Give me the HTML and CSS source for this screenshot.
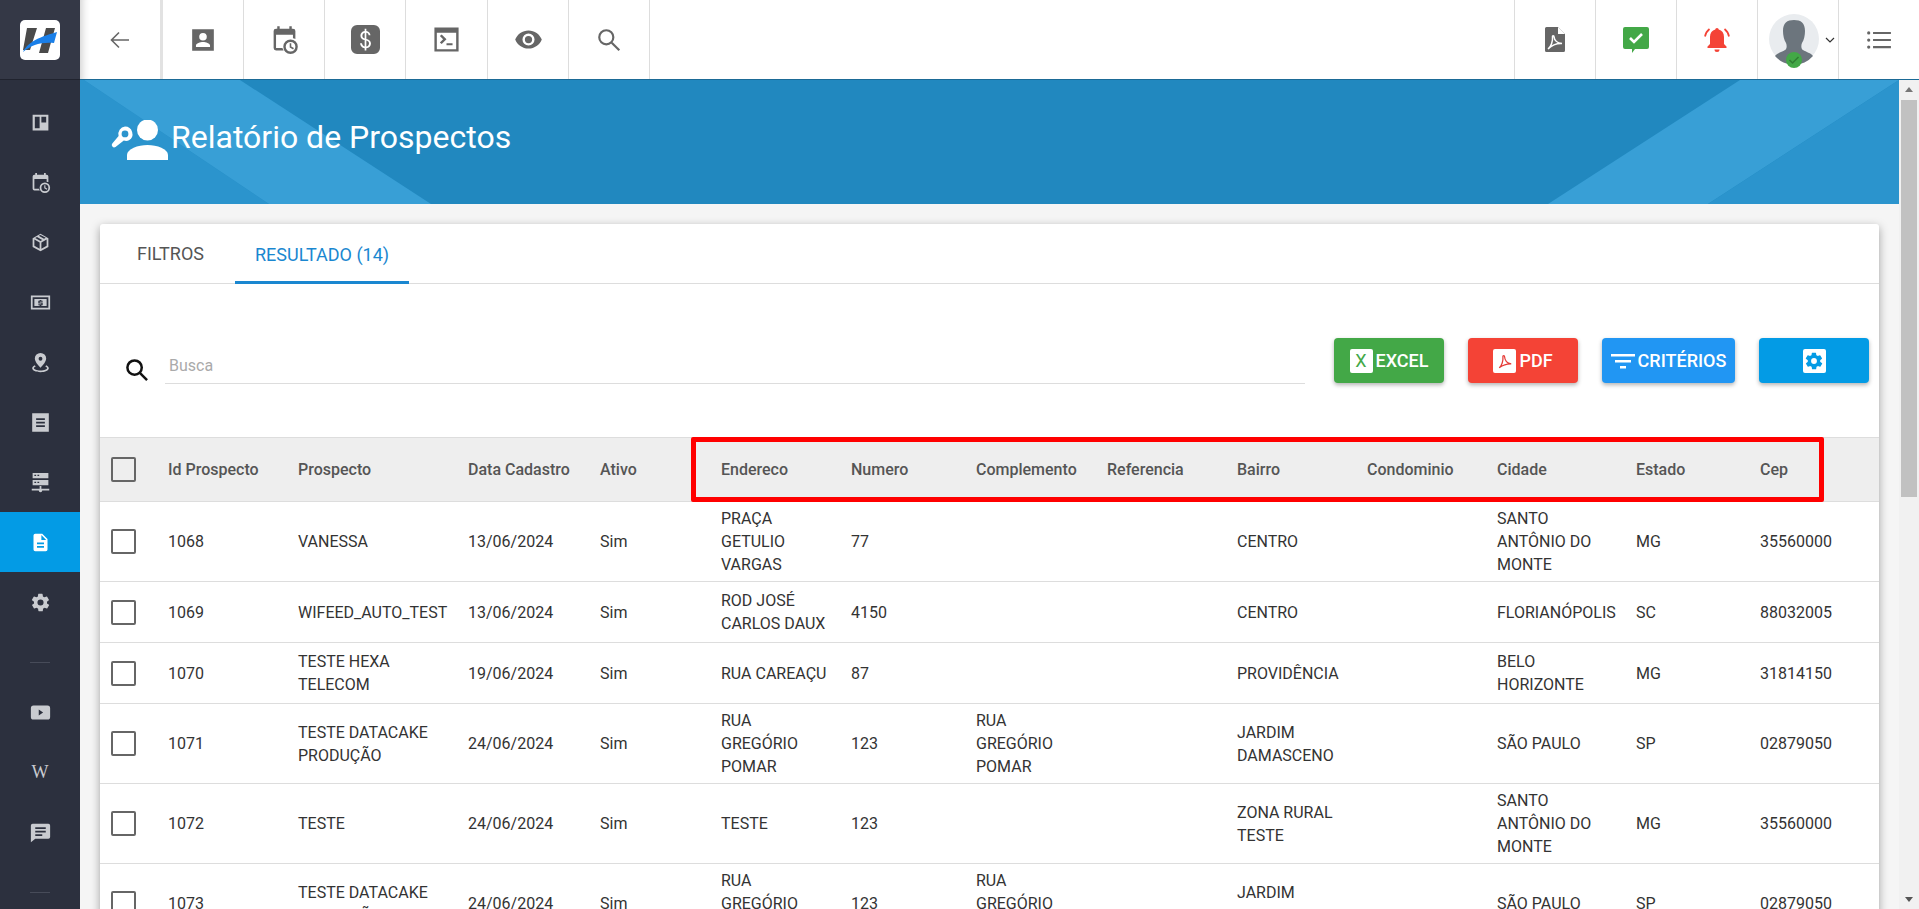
FILE: index.html
```html
<!DOCTYPE html>
<html lang="pt-BR">
<head>
    <meta charset="UTF-8">
    <title>Relatório de Prospectos</title>
    <link rel="stylesheet" href="styles.css">
</head>
<body>

    <svg class="sprites" width="0" height="0">
        <symbol id="i-cal" viewBox="0 0 24 24"><path d="M6 1h2v2h8V1h2v2h1a2 2 0 0 1 2 2v6.500a7 7 0 0 0-2-.5V8H5v11h5.300a7 7 0 0 0 1 2H5a2 2 0 0 1-2-2V5a2 2 0 0 1 2-2h1z"/><path fill-rule="evenodd" d="M17 12a6 6 0 1 0 0 12 6 6 0 0 0 0-12zm0 2a4 4 0 1 1 0 8 4 4 0 0 1 0-8zm-.7 1v3.600l2.800 1.600.7-1.100-2.200-1.300V15z"/></symbol>
        <symbol id="i-gear" viewBox="0 0 24 24"><path d="M19.400 13a7.500 7.500 0 0 0 0-2l2.100-1.600a.5.5 0 0 0 .1-.6l-2-3.500a.5.5 0 0 0-.6-.2l-2.500 1a7.300 7.300 0 0 0-1.700-1l-.4-2.600a.5.500 0 0 0-.5-.5h-4a.5.500 0 0 0-.5.400l-.4 2.700a7.700 7.700 0 0 0-1.700 1l-2.500-1a.5.500 0 0 0-.6.200l-2 3.500a.5.500 0 0 0 .1.600L4.600 11a7.900 7.900 0 0 0 0 2l-2.100 1.600a.5.500 0 0 0-.1.600l2 3.500c.1.200.4.300.6.200l2.500-1c.5.400 1.100.7 1.700 1l.4 2.600c0 .3.200.5.500.5h4c.2 0 .5-.2.500-.4l.4-2.700a7.700 7.700 0 0 0 1.700-1l2.500 1c.2.100.5 0 .6-.2l2-3.500a.5.500 0 0 0-.1-.6zM12 15.500a3.500 3.500 0 1 1 0-7 3.500 3.500 0 0 1 0 7z"/></symbol>
    </svg>

    <aside class="sidebar">
        <div class="brand">
            <div class="logo">
                <svg viewBox="0 0 40 40" width="40" height="40">
                    <path fill="#4a4a4a" d="M7 8h10l-7 22H3zM26 8h9l-7 25h-9z"/>
                    <path fill="#1a7fe8" d="M3 32C7 24 15 18 37 12l-3 11c-14-1-22 2-31 9z"/>
                </svg>
            </div>
        </div>
        <nav class="side-nav">
            <a class="side-item"><svg viewBox="0 0 24 24"><path fill-rule="evenodd" d="M3 3h18v18H3zm2.500 2.500v13h5.500v-13zm7.500 0V12h5.500V5.500z"/></svg></a>
            <a class="side-item"><svg><use href="#i-cal"/></svg></a>
            <a class="side-item"><svg viewBox="0 0 24 24"><path fill-rule="evenodd" d="M12 2l9 5v10l-9 5-9-5V7zM8 5.600L6 6.900l6 3.300 2-1.200zm2-1.200l6 3.400 2-1.100-6-3.300zM5 8.700v7.100l6 3.400v-7.200zm14 0l-6 3.300v7.200l6-3.400z"/></svg></a>
            <a class="side-item"><svg viewBox="0 0 24 24"><path fill-rule="evenodd" d="M1 4h22v16H1zm2 2v12h18V6zm2 2h14v8H5zm6 1v1h-1.500v3H13v1H9.500v1H11v1h2v-1h1.500v-3H11v-1h3.500V10H13V9z"/></svg></a>
            <a class="side-item"><svg viewBox="0 0 24 24"><path fill-rule="evenodd" d="M12 1a6.500 6.500 0 0 0-6.500 6.500C5.500 12 12 18 12 18s6.500-6 6.500-10.500A6.500 6.500 0 0 0 12 1zm0 4.500a2.200 2.200 0 1 1 0 4.400 2.200 2.200 0 0 1 0-4.400z"/><path d="M5.500 15C3.400 16 2.500 17.200 2.500 18.500c0 2.500 4.200 4.500 9.500 4.500s9.500-2 9.500-4.500c0-1.300-.9-2.500-3-3.500l-1 1.700c1.300.6 2 1.200 2 1.800 0 1-3 2.500-7.500 2.500s-7.500-1.500-7.500-2.500c0-.6.700-1.200 2-1.800z"/></svg></a>
            <a class="side-item"><svg viewBox="0 0 24 24"><path fill-rule="evenodd" d="M2.500 1.500h19v21h-19zM7 7v2h10V7zm0 4v2h10v-2zm0 4v2h10v-2z"/></svg></a>
            <a class="side-item"><svg viewBox="0 0 24 24"><path fill-rule="evenodd" d="M3 1h18v6H3zm2 2v1.500h2V3zm3.500 0v1.500h2V3zM3 9h18v6H3zm2 2v1.500h2V11zm3.500 0v1.500h2V11zM11 16h2v3.200h9V21h-8a2 2 0 0 1-4 0H2v-1.800h9z"/></svg></a>
            <a class="side-item active"><svg viewBox="0 0 24 24"><path fill-rule="evenodd" d="M6 2h8l6 6v12a2 2 0 0 1-2 2H6a2 2 0 0 1-2-2V4a2 2 0 0 1 2-2zm7 1.500V9h5.500zM8 12v2h8v-2zm0 4v2h8v-2z"/></svg></a>
            <a class="side-item"><svg><use href="#i-gear"/></svg></a>
            <hr class="side-sep">
            <a class="side-item"><svg viewBox="0 0 24 24"><path fill-rule="evenodd" d="M4 4h16a3 3 0 0 1 3 3v10a3 3 0 0 1-3 3H4a3 3 0 0 1-3-3V7a3 3 0 0 1 3-3zm6 4.500v7l5-3.500z"/></svg></a>
            <a class="side-item wiki">W</a>
            <a class="side-item"><svg viewBox="0 0 24 24"><path fill-rule="evenodd" d="M3 2h18a2 2 0 0 1 2 2v13a2 2 0 0 1-2 2H6l-5 4V4a2 2 0 0 1 2-2zm3 4v2h12V6zm0 4v2h12v-2zm0 4v2h8v-2z"/></svg></a>
            <hr class="side-sep">
        </nav>
    </aside>

    <header class="topbar">
        <a class="top-cell back"><svg viewBox="0 0 24 24" fill="none" stroke="#666" stroke-width="1.600"><path d="M21 12H3.500M11 4.500L3.500 12l7.500 7.500"/></svg></a>
        <a class="top-cell"><svg viewBox="0 0 24 24"><path fill-rule="evenodd" d="M2 2h20v20H2zm10 3.500a3.500 3.500 0 1 0 0 7 3.500 3.500 0 0 0 0-7zM5.500 18.500h13V17c0-2-4-3.200-6.500-3.200S5.500 15 5.500 17z"/></svg></a>
        <a class="top-cell"><svg class="wide"><use href="#i-cal"/></svg></a>
        <a class="top-cell"><svg class="wide" viewBox="0 0 24 24"><path fill-rule="evenodd" d="M5 0h14a5 5 0 0 1 5 5v14a5 5 0 0 1-5 5H5a5 5 0 0 1-5-5V5a5 5 0 0 1 5-5zm6.300 3v2C9 5.400 7.800 7 7.800 8.800c0 2.300 1.700 3.200 3.500 3.700v5.300c-1.300-.3-2.100-1.300-2.200-2.600H7.500c.1 2.200 1.500 3.800 3.800 4.100V21h1.400v-1.700c2.300-.3 3.800-1.900 3.800-4 0-2.500-1.900-3.300-3.800-3.800V6.400c1.100.2 1.800 1 1.900 2.100h1.500c-.1-1.900-1.400-3.300-3.400-3.600V3zm0 3.400v4.700c-1.200-.4-1.900-1-1.900-2.300 0-1.200.8-2.100 1.900-2.400zm1.400 6.400c1.300.4 2.200 1 2.200 2.500 0 1.300-.9 2.300-2.200 2.500z"/></svg></a>
        <a class="top-cell term"><svg class="wide" viewBox="0 0 24 24"><path fill-rule="evenodd" d="M2 2h20v20H2zm2 4.500V20h16V6.500zM6.500 9L8 7.800l4 4-4 4-1.500-1.300 2.700-2.700zM12 15h5v1.800h-5z"/></svg></a>
        <a class="top-cell"><svg class="wide" viewBox="0 0 24 24"><path fill-rule="evenodd" d="M12 4.500C7 4.500 2.700 7.600 1 12c1.700 4.400 6 7.500 11 7.500s9.300-3.100 11-7.500c-1.700-4.400-6-7.500-11-7.500zM12 7a5 5 0 1 1 0 10 5 5 0 0 1 0-10zm0 2a3 3 0 1 0 0 6 3 3 0 0 0 0-6z"/></svg></a>
        <a class="top-cell"><svg viewBox="0 0 24 24" fill="none" stroke="#666" stroke-width="2"><circle cx="9.500" cy="9.500" r="6.500"/><path d="M14.500 14.500L21.500 21.500"/></svg></a>
        <span class="top-gap"></span>
        <a class="top-cell first"><svg class="pdf" viewBox="0 0 20 25"><path d="M1.500 0H13l7 7v16.500a1.500 1.500 0 0 1-1.500 1.500h-17A1.500 1.500 0 0 1 0 23.500v-22A1.500 1.500 0 0 1 1.500 0z"/><path fill="#fff" d="M13 0l7 7h-7z"/><path fill="none" stroke="#fff" stroke-width="1.500" d="M3 22c3-2 5-8 4.500-12-.2-1.800 1.500-1.800 1.600 0 .2 3 3 6 7.900 6.500-5-.3-10 1.500-14 5.500z"/></svg></a>
        <a class="top-cell"><svg class="bubble" viewBox="0 0 26 26"><path fill="#43a847" d="M2 0h22a2 2 0 0 1 2 2v18a2 2 0 0 1-2 2H12l-3 4v-4H2a2 2 0 0 1-2-2V2a2 2 0 0 1 2-2z"/><path fill="none" stroke="#fff" stroke-width="2.600" d="M7 11l4 4 8-8"/></svg></a>
        <a class="top-cell"><svg class="bubble" viewBox="0 0 26 26"><path fill="#f44336" d="M13 1c-1 0-1.700.8-1.700 1.600C8 3.500 6 6 6 10v7l-2.500 2.500V21h19v-1.500L20 17v-7c0-4-2-6.500-5.300-7.400C14.700 1.800 14 1 13 1zM10.500 22.500a2.500 2.500 0 0 0 5 0z"/><path fill="none" stroke="#f44336" stroke-width="1.700" d="M5.500 2C3 4 1.500 6.500 1 9.500M20.500 2c2.500 2 4 4.500 4.500 7.500"/></svg></a>
        <a class="top-cell user">
            <svg class="avatar" viewBox="0 0 50 56">
                <circle cx="25" cy="25" r="25" fill="#e9ecef"/>
                <path fill="#6c757d" d="M25 6c-7 0-11 3-11 11 0 4 1 9 3 12 1 2 1 6-1 7-3 2-8 3-10 6a25 25 0 0 0 38 0c-2-3-7-4-10-6-2-1-2-5-1-7 2-3 3-8 3-12 0-8-4-11-11-11z"/>
                <circle cx="25" cy="46" r="8" fill="#43a847"/>
                <path fill="none" stroke="#2f7d33" stroke-width="1.500" d="M20.500 46l3 3 6-6"/>
            </svg>
            <svg class="caret" viewBox="0 0 10 6" fill="none" stroke="#333" stroke-width="1.200"><path d="M1 1l4 4 4-4"/></svg>
        </a>
        <a class="top-cell"><svg viewBox="0 0 24 24"><path d="M6.500 4.500h16.500v2H6.500zM6.500 11h16.500v2H6.500zM6.500 17.500h16.500v2H6.500z"/><circle cx="2.500" cy="5.500" r="1.500"/><circle cx="2.500" cy="12" r="1.500"/><circle cx="2.500" cy="18.500" r="1.500"/></svg></a>
    </header>

    <main class="main">
        <section class="banner">
            <svg class="banner-bg" viewBox="0 0 1819 124" preserveAspectRatio="none">
                <polygon fill="#2b94cd" points="0,0 4,0 189,124 0,124"/>
                <polygon fill="#389fd6" points="4,0 160,0 351,124 189,124"/>
                <polygon fill="#389fd6" points="1660,0 1819,0 1628,124 1468,124"/>
                <polygon fill="#2b94cd" points="1819,0 1819,124 1628,124"/>
            </svg>
            <h1 class="banner-title">
                <svg viewBox="0 0 57 40" width="57" height="40">
                    <circle cx="36.500" cy="10" r="10.500" fill="#fff"/>
                    <path fill="#fff" d="M16 40v-5c0-6 11-10 20.500-10S57 29 57 35v5z"/>
                    <path fill="#fff" fill-rule="evenodd" d="M14 6.500a7.500 7.500 0 0 1 4 13.800c-1.500.9-3.700.9-5.200.2L4.500 27a2.400 2.400 0 0 1-3.200-3.500l6.300-7.600A7.500 7.500 0 0 1 14 6.500zm0 4a3.400 3.400 0 1 0 0 6.800 3.400 3.400 0 0 0 0-6.800z"/>
                </svg>
                Relatório de Prospectos
            </h1>
        </section>

        <section class="card">
            <div class="tabs">
                <a class="tab">FILTROS</a>
                <a class="tab active">RESULTADO (14)</a>
            </div>

            <div class="toolbar">
                <svg class="search-icon" viewBox="0 0 24 24" fill="none" stroke="#111" stroke-width="2.600"><circle cx="10" cy="10" r="7.500"/><path d="M15.500 15.500L23 23"/></svg>
                <input class="search-input" type="text" placeholder="Busca">
                <button class="btn btn-excel"><span class="btn-tile">X</span>EXCEL</button>
                <button class="btn btn-pdf">
                    <span class="btn-tile"><svg viewBox="0 0 24 24" fill="none" stroke="#e53935" stroke-width="1.500"><path d="M5 20c3-2 5-8 4.500-13-.2-2 2-2 2 0 .2 4 3 8 8 8.500-5-.3-10 1.500-14.500 4.500z"/></svg></span>PDF
                </button>
                <button class="btn btn-crit">
                    <svg class="btn-filter" viewBox="0 0 24 18"><path fill="#fff" d="M0 2h24v2.500H0zM4 8h16v2.500H4zM9 14h6v2.500H9z"/></svg>CRITÉRIOS
                </button>
                <button class="btn btn-cfg">
                    <span class="btn-tile cfg"><svg viewBox="0 0 24 24" fill="#039be5"><use href="#i-gear"/></svg></span>
                </button>
            </div>

            <div class="table-wrap">
                <table class="grid">
                    <colgroup>
                        <col class="c-check"><col class="c-id"><col class="c-name"><col class="c-date"><col class="c-active">
                        <col class="c-addr"><col class="c-num"><col class="c-comp"><col class="c-ref"><col class="c-bairro">
                        <col class="c-cond"><col class="c-city"><col class="c-uf"><col class="c-cep">
                    </colgroup>
                    <thead>
                        <tr>
                            <th><span class="check"></span></th>
                            <th>Id Prospecto</th><th>Prospecto</th><th>Data Cadastro</th><th>Ativo</th><th>Endereco</th><th>Numero</th><th>Complemento</th><th>Referencia</th><th>Bairro</th><th>Condominio</th><th>Cidade</th><th>Estado</th><th>Cep</th>
                        </tr>
                    </thead>
                    <tbody>
                        <tr>
                            <td><span class="check"></span></td>
                            <td>1068</td><td>VANESSA</td><td>13/06/2024</td><td>Sim</td><td>PRAÇA GETULIO VARGAS</td><td>77</td><td></td><td></td><td>CENTRO</td><td></td><td>SANTO ANTÔNIO DO MONTE</td><td>MG</td><td>35560000</td>
                        </tr>
                        <tr>
                            <td><span class="check"></span></td>
                            <td>1069</td><td>WIFEED_AUTO_TEST</td><td>13/06/2024</td><td>Sim</td><td>ROD JOSÉ CARLOS DAUX</td><td>4150</td><td></td><td></td><td>CENTRO</td><td></td><td>FLORIANÓPOLIS</td><td>SC</td><td>88032005</td>
                        </tr>
                        <tr>
                            <td><span class="check"></span></td>
                            <td>1070</td><td>TESTE HEXA TELECOM</td><td>19/06/2024</td><td>Sim</td><td>RUA CAREAÇU</td><td>87</td><td></td><td></td><td>PROVIDÊNCIA</td><td></td><td>BELO HORIZONTE</td><td>MG</td><td>31814150</td>
                        </tr>
                        <tr>
                            <td><span class="check"></span></td>
                            <td>1071</td><td>TESTE DATACAKE PRODUÇÃO</td><td>24/06/2024</td><td>Sim</td><td>RUA GREGÓRIO POMAR</td><td>123</td><td>RUA GREGÓRIO POMAR</td><td></td><td>JARDIM DAMASCENO</td><td></td><td>SÃO PAULO</td><td>SP</td><td>02879050</td>
                        </tr>
                        <tr>
                            <td><span class="check"></span></td>
                            <td>1072</td><td>TESTE</td><td>24/06/2024</td><td>Sim</td><td>TESTE</td><td>123</td><td></td><td></td><td>ZONA RURAL TESTE</td><td></td><td>SANTO ANTÔNIO DO MONTE</td><td>MG</td><td>35560000</td>
                        </tr>
                        <tr>
                            <td><span class="check"></span></td>
                            <td>1073</td><td>TESTE DATACAKE PRODUÇÃO</td><td>24/06/2024</td><td>Sim</td><td>RUA GREGÓRIO POMAR</td><td>123</td><td>RUA GREGÓRIO POMAR</td><td></td><td>JARDIM DAMASCENO</td><td></td><td>SÃO PAULO</td><td>SP</td><td>02879050</td>
                        </tr>
                    </tbody>
                </table>
                <div class="highlight"></div>
            </div>
        </section>

        <div class="scrollbar">
            <span class="scroll-up"></span>
            <span class="scroll-thumb"></span>
            <span class="scroll-down"></span>
        </div>
    </main>

</body>
</html>
```

FILE: styles.css
```css
/* General styles */
* {
    box-sizing: border-box;
}

html, body {
    height: 100%;
}

body {
    margin: 0;
    font-family: Roboto, "Liberation Sans", sans-serif;
    font-size: 16px;
    color: #333;
    background-color: #f5f5f5;
    overflow: hidden;
    display: grid;
    grid-template-columns: 80px 1fr;
    grid-template-rows: 80px 1fr;
}

.sprites {
    position: absolute;
}

/* Sidebar */
.sidebar {
    grid-row: 1 / 3;
    background-color: #2c303e;
    z-index: 3;
}

.brand {
    height: 80px;
    display: flex;
    align-items: center;
    justify-content: center;
    background-color: #343846;
    border-bottom: 1px solid #20232e;
}

.logo {
    width: 40px;
    height: 40px;
    background-color: #fff;
    border-radius: 5px;
}

.logo svg {
    display: block;
}

.side-nav {
    display: flex;
    flex-direction: column;
    padding-top: 12px;
}

.side-item {
    height: 60px;
    flex: none;
    display: flex;
    align-items: center;
    justify-content: center;
    fill: #c9cbd0;
}

.side-item svg {
    width: 21px;
    height: 21px;
}

.side-item.active {
    background-color: #039be5;
    fill: #fff;
}

.wiki {
    font-family: "Liberation Serif", serif;
    font-size: 18px;
    color: #c9cbd0;
}

.side-sep {
    width: 20px;
    height: 1px;
    flex: none;
    margin: 30px auto 19px;
    border: 0;
    background-color: #474b59;
}

/* Top bar */
.topbar {
    display: flex;
    background-color: #fff;
    border-bottom: 1px solid #1b6a96;
    box-shadow: inset 10px 0 8px -8px rgba(0, 0, 0, 0.2);
    z-index: 2;
}

.top-cell {
    width: 81px;
    flex: none;
    display: flex;
    align-items: center;
    justify-content: center;
    border-right: 1px solid #ddd;
    fill: #666;
}

.top-cell svg {
    width: 26px;
    height: 26px;
}

.top-cell svg.wide {
    width: 29px;
    height: 29px;
}

.top-cell svg.pdf {
    width: 20px;
    height: 25px;
}

.top-cell svg.bubble {
    width: 26px;
    height: 26px;
}

.top-cell.back {
    width: 83px;
    border-right: 3px solid #e2e2e2;
}

.top-cell.back svg {
    width: 24px;
    height: 24px;
}

.top-cell.term {
    width: 82px;
}

.top-cell.first {
    width: 82px;
    border-left: 1px solid #ddd;
}

.top-cell:last-child {
    width: 80px;
    border-right: 0;
}

.top-gap {
    flex: 1;
}

.user {
    gap: 6px;
    padding-left: 8px;
}

.top-cell svg.avatar {
    width: 50px;
    height: 56px;
    margin-top: 4px;
}

.top-cell svg.caret {
    width: 10px;
    height: 6px;
}

/* Main area */
.main {
    position: relative;
    overflow: hidden;
    padding-right: 20px;
}

.banner {
    position: relative;
    height: 124px;
    background-color: #2188bf;
    display: flex;
    align-items: center;
    padding: 0 0 10px 31px;
}

.banner-bg {
    position: absolute;
    inset: 0;
    width: 100%;
    height: 100%;
}

.banner-title {
    position: relative;
    display: flex;
    align-items: center;
    gap: 3px;
    margin: 0;
    font-size: 32px;
    font-weight: 400;
    color: #fff;
}

.banner-title svg {
    margin-top: 6px;
}

/* Card */
.card {
    margin: 20px;
    background-color: #fff;
    border-radius: 3px;
    box-shadow: 0 3px 10px rgba(0, 0, 0, 0.35);
}

.tabs {
    display: flex;
    height: 60px;
    padding-left: 17px;
    border-bottom: 1px solid #ddd;
}

.tab {
    display: flex;
    align-items: center;
    padding: 0 20px;
    margin-right: 11px;
    font-size: 18px;
    color: #555;
}

.tab.active {
    color: #1a87d0;
    border-bottom: 3px solid #1a87d0;
    height: 60px;
    padding-top: 3px;
}

.toolbar {
    display: flex;
    align-items: flex-start;
    height: 153px;
    padding: 54px 10px 0 25px;
}

.search-icon {
    width: 23px;
    height: 23px;
    margin-top: 20px;
    margin-right: 17px;
    flex: none;
}

.search-input {
    flex: 1;
    height: 46px;
    padding: 10px 4px 0;
    border: 0;
    border-bottom: 1px solid #ddd;
    outline: none;
    font-family: inherit;
    font-size: 16px;
}

.search-input::placeholder {
    color: #aaa;
}

.btn {
    height: 45px;
    width: 110px;
    flex: none;
    margin-left: 29px;
    display: flex;
    align-items: center;
    justify-content: center;
    gap: 3px;
    padding: 0;
    border: 0;
    border-radius: 4px;
    color: #fff;
    font-family: inherit;
    font-size: 18px;
    font-weight: 500;
    box-shadow: 0 2px 4px rgba(0, 0, 0, 0.3);
}

.btn + .btn {
    margin-left: 24px;
}

.btn-excel {
    background-color: #43a847;
}

.btn-pdf {
    background-color: #f44336;
}

.btn-crit {
    width: 133px;
    background-color: #2196f3;
}

.btn-cfg {
    background-color: #039be5;
}

.btn-tile {
    width: 23px;
    height: 24px;
    display: flex;
    align-items: center;
    justify-content: center;
    background-color: #fff;
    border-radius: 2px;
    color: #43a847;
    font-weight: 400;
}

.btn-tile svg {
    width: 20px;
    height: 20px;
}

.btn-filter {
    width: 24px;
    height: 18px;
}

/* Table */
.table-wrap {
    position: relative;
}

.grid {
    width: 100%;
    table-layout: fixed;
    border-collapse: collapse;
}

.c-check { width: 56px; }
.c-id { width: 130px; }
.c-name { width: 170px; }
.c-date { width: 132px; }
.c-active { width: 121px; }
.c-addr { width: 130px; }
.c-num { width: 125px; }
.c-comp { width: 131px; }
.c-ref { width: 130px; }
.c-bairro { width: 130px; }
.c-cond { width: 130px; }
.c-city { width: 139px; }
.c-uf { width: 124px; }

.grid th {
    height: 64px;
    padding: 0 12px;
    text-align: left;
    font-weight: 500;
    color: #555;
    background-color: #eee;
    border-top: 1px solid #ddd;
    border-bottom: 1px solid #ddd;
}

.grid td {
    height: 61px;
    padding: 5px 12px;
    line-height: 23px;
    border-bottom: 1px solid #ddd;
}

.check {
    display: block;
    width: 25px;
    height: 25px;
    margin-left: -1px;
    border: 2px solid #666;
    border-radius: 2px;
}

.highlight {
    position: absolute;
    left: 591px;
    top: 0;
    width: 1133px;
    height: 65px;
    border: 5px solid #f00;
    border-radius: 2px;
    pointer-events: none;
}

/* Scrollbar */
.scrollbar {
    position: absolute;
    top: 0;
    right: 0;
    bottom: 0;
    width: 20px;
    background-color: #f1f1f1;
    padding: 0 2px;
    display: flex;
    flex-direction: column;
}

.scroll-up {
    width: 0;
    height: 0;
    margin: 7px auto 8px;
    border-left: 4px solid transparent;
    border-right: 4px solid transparent;
    border-bottom: 5px solid #777;
}

.scroll-thumb {
    height: 397px;
    background-color: #c1c1c1;
}

.scroll-down {
    width: 0;
    height: 0;
    margin: auto auto 7px;
    border-left: 4px solid transparent;
    border-right: 4px solid transparent;
    border-top: 5px solid #555;
}
```
